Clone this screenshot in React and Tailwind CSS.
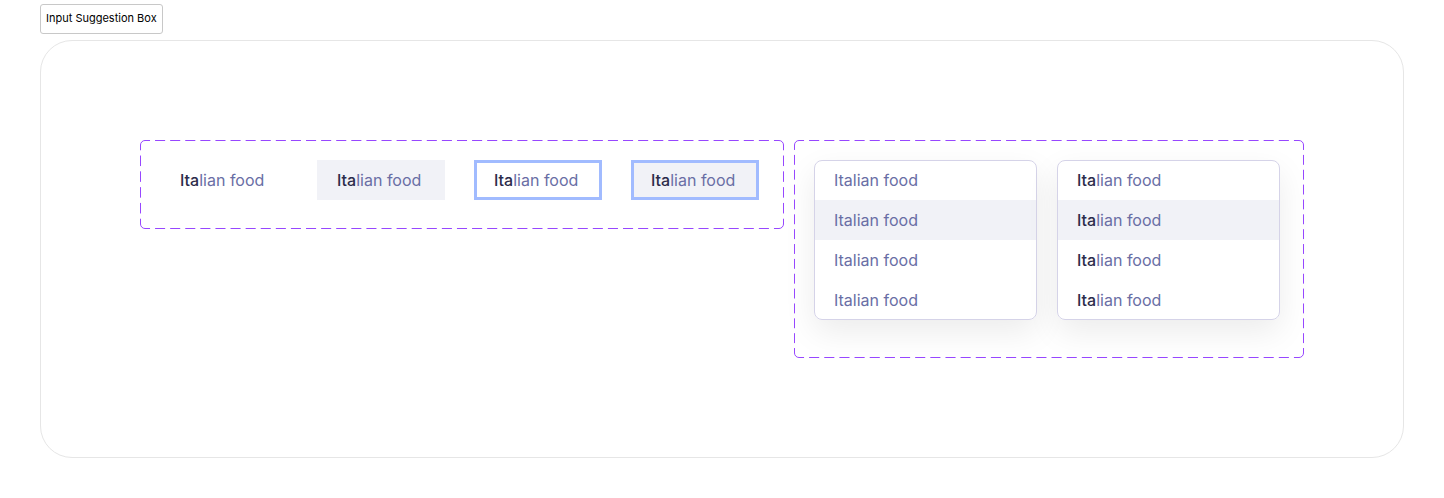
import React from "react";

const FONT = "font-['Inter','Liberation_Sans',sans-serif]";

function Suggestion({ matched, highlighted, focused, className = "" }) {
  return (
    <button
      type="button"
      className={`flex h-10 items-center px-5 text-left text-base leading-5 whitespace-nowrap text-[#696ea5] ${
        highlighted ? "bg-[#f1f2f7]" : "bg-white"
      } ${focused ? "outline-3 -outline-offset-3 outline-[#a1bbff]" : ""} ${className}`}
    >
      <span>
        {matched ? (
          <>
            <span className="font-medium text-[#2b2c4b]">Ita</span>lian food
          </>
        ) : (
          "Italian food"
        )}
      </span>
    </button>
  );
}

function SuggestionList({ matched, label }) {
  return (
    <ul
      aria-label={label}
      className="w-[223px] overflow-hidden rounded-lg bg-white shadow-[0_12px_32px_rgba(0,0,0,0.08)] outline-1 -outline-offset-1 outline-[#d5d3e8]"
    >
      {[0, 1, 2, 3].map((i) => (
        <li key={i}>
          <Suggestion matched={matched} highlighted={i === 1} className="w-full" />
        </li>
      ))}
    </ul>
  );
}

/* Dashed frame: every side starts and ends on half a dash so corners stay solid. */
function DashedFrame({ width: w, height: h, columns, rows, className, children }) {
  const side = { strokeDasharray: "10 5", strokeDashoffset: 5 };
  const r = w - 0.5;
  const b = h - 0.5;
  return (
    <div className={`relative shrink-0 ${className}`}>
      <svg
        aria-hidden="true"
        className="pointer-events-none absolute inset-0 h-full w-full"
        viewBox={`0 0 ${w} ${h}`}
        preserveAspectRatio="none"
        fill="none"
        stroke="#9747ff"
      >
        <path d={`M5 .5H${w - 5}`} pathLength={columns * 15} {...side} />
        <path d={`M5 ${b}H${w - 5}`} pathLength={columns * 15} {...side} />
        <path d={`M.5 5V${h - 5}`} pathLength={rows * 15} {...side} />
        <path d={`M${r} 5V${h - 5}`} pathLength={rows * 15} {...side} />
        <path
          d={`M.5 5A4.5 4.5 0 0 1 5 .5M${w - 5} .5A4.5 4.5 0 0 1 ${r} 5M${r} ${h - 5}A4.5 4.5 0 0 1 ${w - 5} ${b}M5 ${b}A4.5 4.5 0 0 1 .5 ${h - 5}`}
        />
      </svg>
      {children}
    </div>
  );
}

export default function App() {
  return (
    <main className={`px-10 pt-1 pb-10 ${FONT}`}>
      <h1 className="mb-1.5 w-fit rounded-[3px] border border-[#c8c8c8] px-[5px] pt-[5px] pb-[7px] text-[11px] leading-4 text-black">
        Input Suggestion Box
      </h1>
      <section className="flex items-start gap-2.5 rounded-[32px] border border-[#e6e6e6] p-[99px]">
        <DashedFrame
          width={644}
          height={89}
          columns={42}
          rows={5}
          className="flex gap-[29px] pt-5 pr-[25px] pb-[29px] pl-5"
        >
          <Suggestion matched className="w-32" />
          <Suggestion matched highlighted className="w-32" />
          <Suggestion matched focused className="w-32" />
          <Suggestion matched highlighted focused className="w-32" />
        </DashedFrame>
        <DashedFrame
          width={510}
          height={218}
          columns={33}
          rows={14}
          className="flex gap-5 pt-5 pr-6 pb-[38px] pl-5"
        >
          <SuggestionList label="Suggestions" />
          <SuggestionList label="Suggestions with matched text" matched />
        </DashedFrame>
      </section>
    </main>
  );
}
